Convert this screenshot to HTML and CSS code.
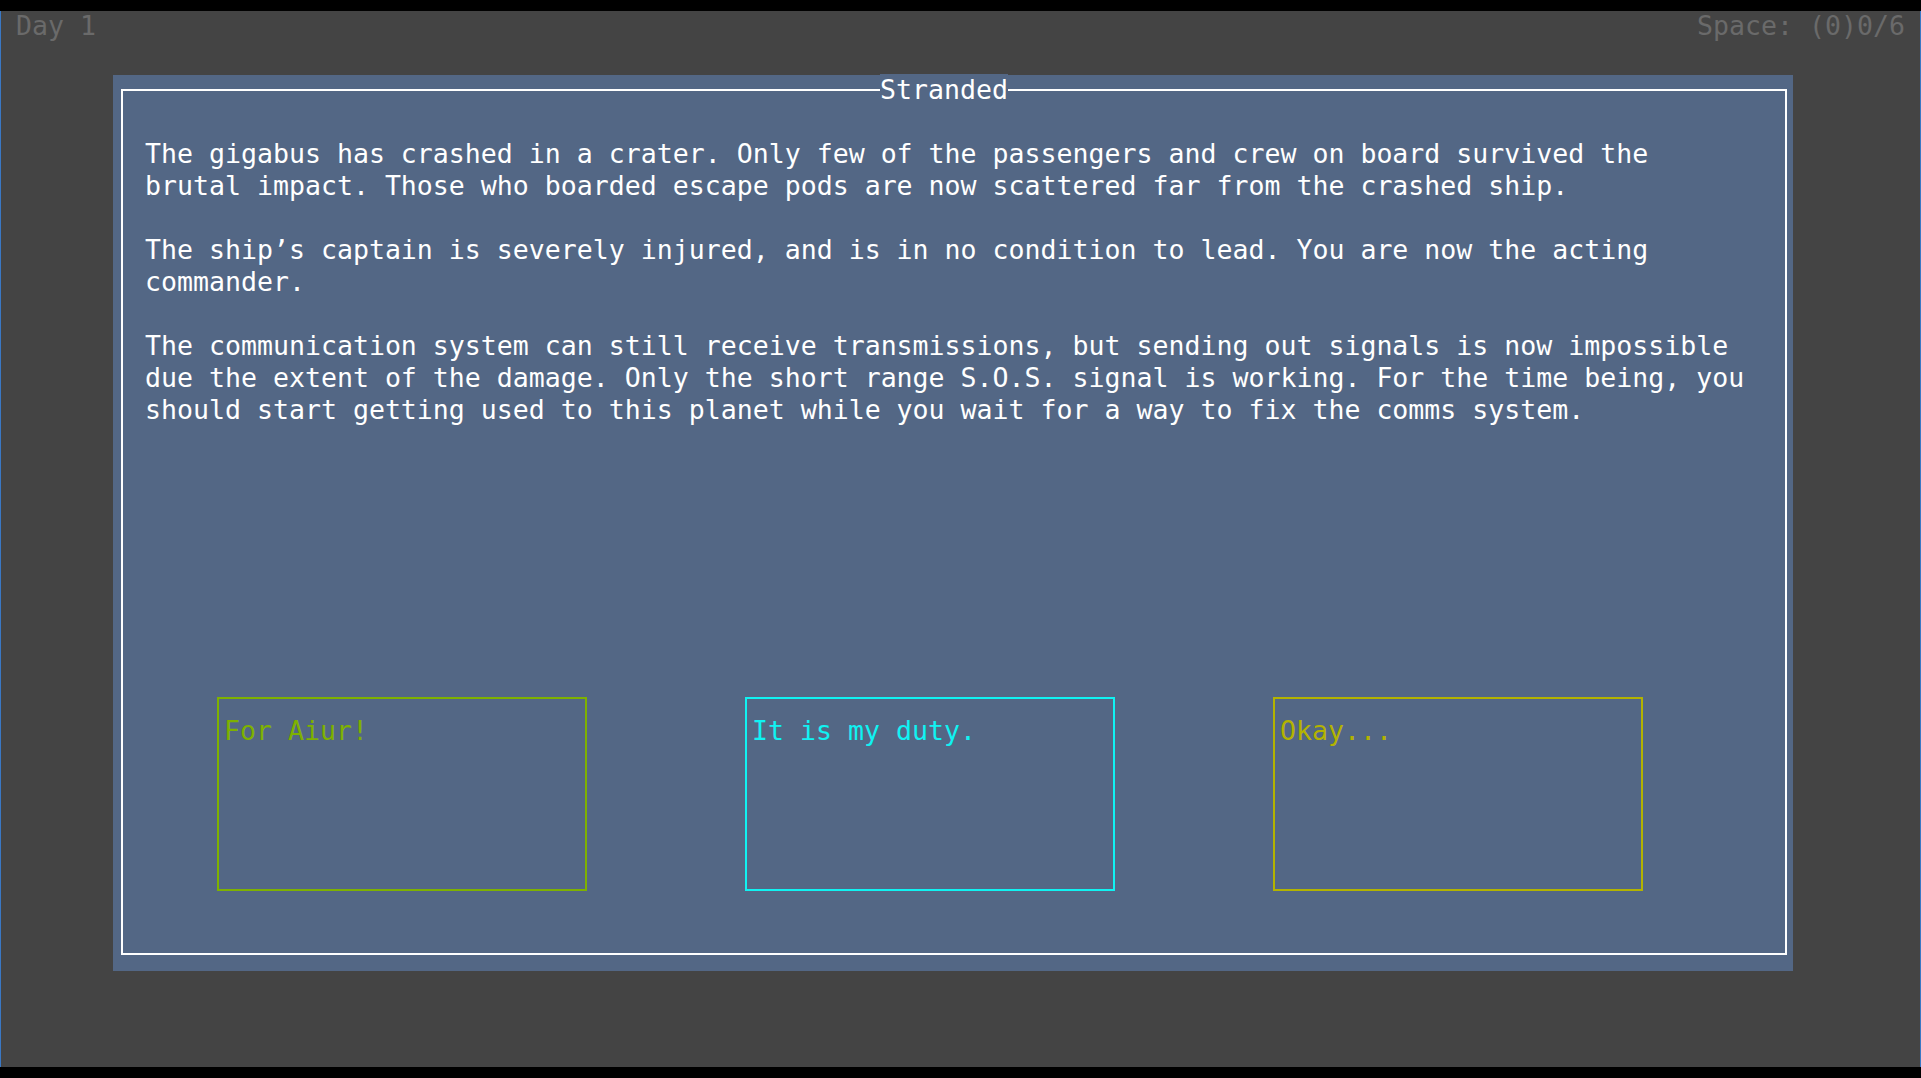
FILE: index.html
```html
<!DOCTYPE html>
<html lang="en">
<head>
<meta charset="utf-8">
<title>Stranded</title>
<link rel="stylesheet" href="styles.css">
</head>
<body>
<div class="screen">
  <header class="hud">
    <span class="hud-day">Day 1</span>
    <span class="hud-space">Space: (0)0/6</span>
  </header>
  <section class="panel">
    <div class="frame">
      <h1 class="frame-title">Stranded</h1>
      <div class="story">
        <p>The gigabus has crashed in a crater. Only few of the passengers and crew on board survived the brutal impact. Those who boarded escape pods are now scattered far from the crashed ship.</p>
        <p>The ship’s captain is severely injured, and is in no condition to lead. You are now the acting commander.</p>
        <p>The communication system can still receive transmissions, but sending out signals is now impossible due the extent of the damage. Only the short range S.O.S. signal is working. For the time being, you should start getting used to this planet while you wait for a way to fix the comms system.</p>
      </div>
      <div class="choices">
        <div class="choice choice-green">For Aiur!</div>
        <div class="choice choice-cyan">It is my duty.</div>
        <div class="choice choice-olive">Okay...</div>
      </div>
    </div>
  </section>
</div>
</body>
</html>
```

FILE: styles.css
```css
html, body {
  margin: 0;
  padding: 0;
}
body {
  background: #000;
  width: 1921px;
  height: 1078px;
  overflow: hidden;
  font-family: "DejaVu Sans Mono", "Liberation Mono", monospace;
  font-size: 26.575px;
}
.screen {
  margin-top: 11px;
  height: 1056px;
  box-sizing: border-box;
  width: 1921px;
  background: #444444;
  border-left: 1px solid #3a78c4;
  border-right: 1px solid #3a78c4;
  display: flex;
  flex-direction: column;
}
.hud {
  display: flex;
  justify-content: space-between;
  line-height: 30px;
  height: 30px;
  padding: 0 15px 0 15px;
  color: #6a6a6a;
}
.panel {
  margin-top: 34px;
  margin-left: 112px;
  width: 1680px;
  height: 896px;
  box-sizing: border-box;
  background: #536785;
  padding: 14px 6px 16px 8px;
  display: flex;
}
.frame {
  position: relative;
  flex: 1;
  min-width: 0;
  border: 2px solid #ffffff;
  padding: 47px 0 62px 22px;
  display: flex;
  flex-direction: column;
  color: #ffffff;
}
.frame-title {
  position: absolute;
  left: 757px;
  top: -17px;
  margin: 0;
  font-size: inherit;
  font-weight: normal;
  line-height: 32px;
  background: #536785;
  color: #ffffff;
}
.story {
  width: 1608px;
  line-height: 32px;
}
.story p {
  margin: 0 0 32px 0;
}
.choices {
  margin-top: auto;
  margin-left: 72px;
  display: flex;
  gap: 158px;
}
.choice {
  width: 370px;
  height: 194px;
  box-sizing: border-box;
  border: 2px solid currentColor;
  padding: 16px 5px 0 5px;
  line-height: 32px;
}
.choice-green { color: #7eb100; }
.choice-cyan { color: #10f2f2; }
.choice-olive { color: #b3b300; }
```
